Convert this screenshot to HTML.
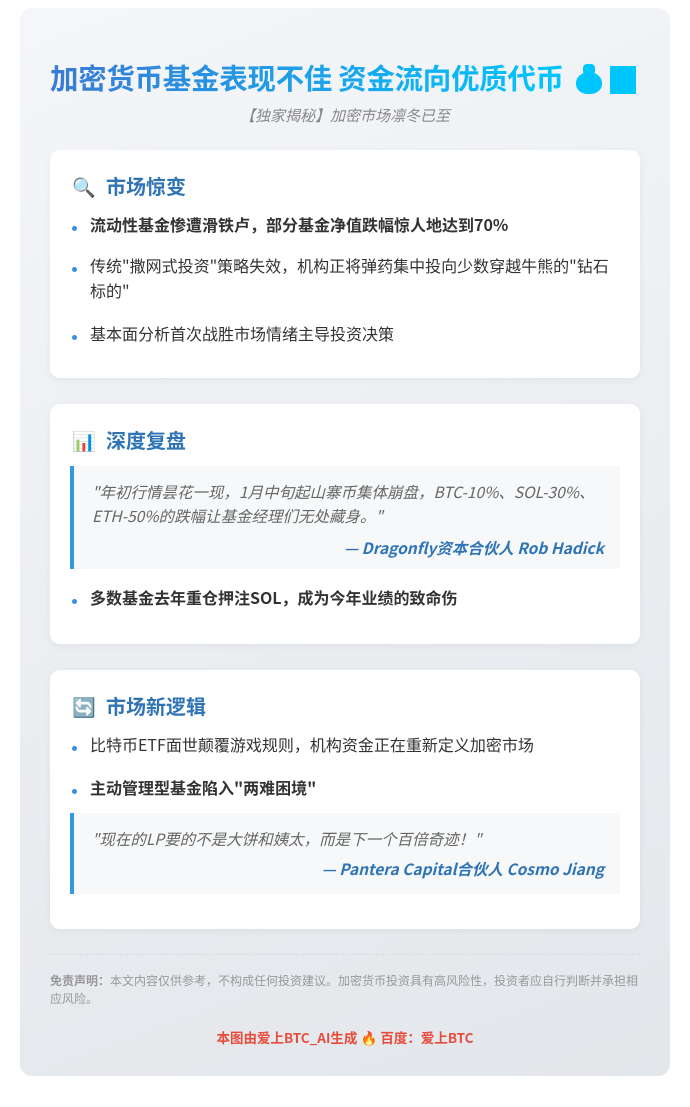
<!DOCTYPE html>
<html><head><meta charset="utf-8"><style>
*{margin:0;padding:0;box-sizing:border-box}
body{width:690px;height:1107px;background:#fff;font-family:"Noto Sans CJK SC","Liberation Sans",sans-serif;color:#333;position:relative}
.wrap{position:absolute;left:20px;top:8px;width:650px;height:1068px;border-radius:12px;background:linear-gradient(160deg,#f4f6f9,#e3e6ea)}
h1{position:absolute;left:30px;top:52px;font-size:28.5px;font-weight:bold;line-height:36px;white-space:nowrap;letter-spacing:-0.3px}
h1 .g{background:linear-gradient(90deg,#3a7bd5,#00c6ff);-webkit-background-clip:text;background-clip:text;color:transparent}
.bag{display:inline-block;position:relative;width:26px;height:30px;margin-left:12px;vertical-align:-5px}
.bag:before{content:"";position:absolute;left:0;top:8px;width:26px;height:22px;border-radius:50% 50% 45% 45%;background:#00c6ff}
.bag:after{content:"";position:absolute;left:7px;top:0;width:12px;height:11px;border-radius:4px;background:#00c6ff}
.sq{display:inline-block;width:26px;height:28px;background:#00c6ff;margin-left:8px;vertical-align:-5px}
.sub{position:absolute;left:0;width:650px;top:97px;text-align:center;font-size:15px;font-style:italic;color:#888;line-height:22px}
.card{position:absolute;left:30px;width:590px;background:#fff;border-radius:10px;box-shadow:0 2px 8px rgba(0,0,0,.05)}
.h{position:absolute;left:22px;font-size:20px;font-weight:bold;color:#2f74b5;line-height:28px}
.h .ic{display:inline-block;width:22px;margin-right:12px;font-size:19px}
.li{position:absolute;left:40px;font-size:16px;line-height:25px;color:#333;width:530px}
.li:before{content:"";position:absolute;left:-18px;top:14px;width:5px;height:5px;border-radius:50%;background:#3a8ee6}
.b{font-weight:bold}
.q{position:absolute;left:20px;width:550px;background:#f6f8fa;border-left:4px solid #3498db;padding:14px 16px 0 18px;font-size:15.5px;font-style:italic;color:#666;line-height:24px}
.q .a{text-align:right;font-weight:bold;color:#2f74b5;margin-top:8px}
.hr{position:absolute;left:30px;width:590px;top:946px;border-top:1px dashed #d8dbe0}
.dis{position:absolute;left:30px;width:592px;top:964px;font-size:12px;line-height:18px;color:#999}
.ft{position:absolute;left:0;width:650px;top:1019px;text-align:center;font-size:13.5px;font-weight:bold;color:#e74c3c;line-height:20px}
</style></head><body><div class="wrap">
<h1><span class="g">加密货币基金表现不佳 资金流向优质代币</span><span class="bag"></span><span class="sq"></span></h1>
<div class="sub">【独家揭秘】加密市场凛冬已至</div>

<div class="card" style="top:142px;height:228px">
<div class="h" style="top:22px"><span class="ic">🔍</span>市场惊变</div>
<div class="li b" style="top:62px">流动性基金惨遭滑铁卢，部分基金净值跌幅惊人地达到70%</div>
<div class="li" style="top:103px">传统"撒网式投资"策略失效，机构正将弹药集中投向少数穿越牛熊的"钻石标的"</div>
<div class="li" style="top:171px">基本面分析首次战胜市场情绪主导投资决策</div>
</div>

<div class="card" style="top:396px;height:240px">
<div class="h" style="top:22px"><span class="ic">📊</span>深度复盘</div>
<div class="q" style="top:62px;height:103px">"年初行情昙花一现，1月中旬起山寨币集体崩盘，BTC-10%、SOL-30%、ETH-50%的跌幅让基金经理们无处藏身。"<div class="a">— Dragonfly资本合伙人 Rob Hadick</div></div>
<div class="li b" style="top:181px">多数基金去年重仓押注SOL，成为今年业绩的致命伤</div>
</div>

<div class="card" style="top:662px;height:259px">
<div class="h" style="top:22px"><span class="ic">🔄</span>市场新逻辑</div>
<div class="li" style="top:62px">比特币ETF面世颠覆游戏规则，机构资金正在重新定义加密市场</div>
<div class="li b" style="top:105px">主动管理型基金陷入"两难困境"</div>
<div class="q" style="top:143px;height:81px">"现在的LP要的不是大饼和姨太，而是下一个百倍奇迹！"<div class="a" style="margin-top:6px">— Pantera Capital合伙人 Cosmo Jiang</div></div>
</div>

<div class="hr"></div>
<div class="dis"><b>免责声明：</b>本文内容仅供参考，不构成任何投资建议。加密货币投资具有高风险性，投资者应自行判断并承担相应风险。</div>
<div class="ft">本图由爱上BTC_AI生成 🔥 百度：爱上BTC</div>
</div></body></html>
